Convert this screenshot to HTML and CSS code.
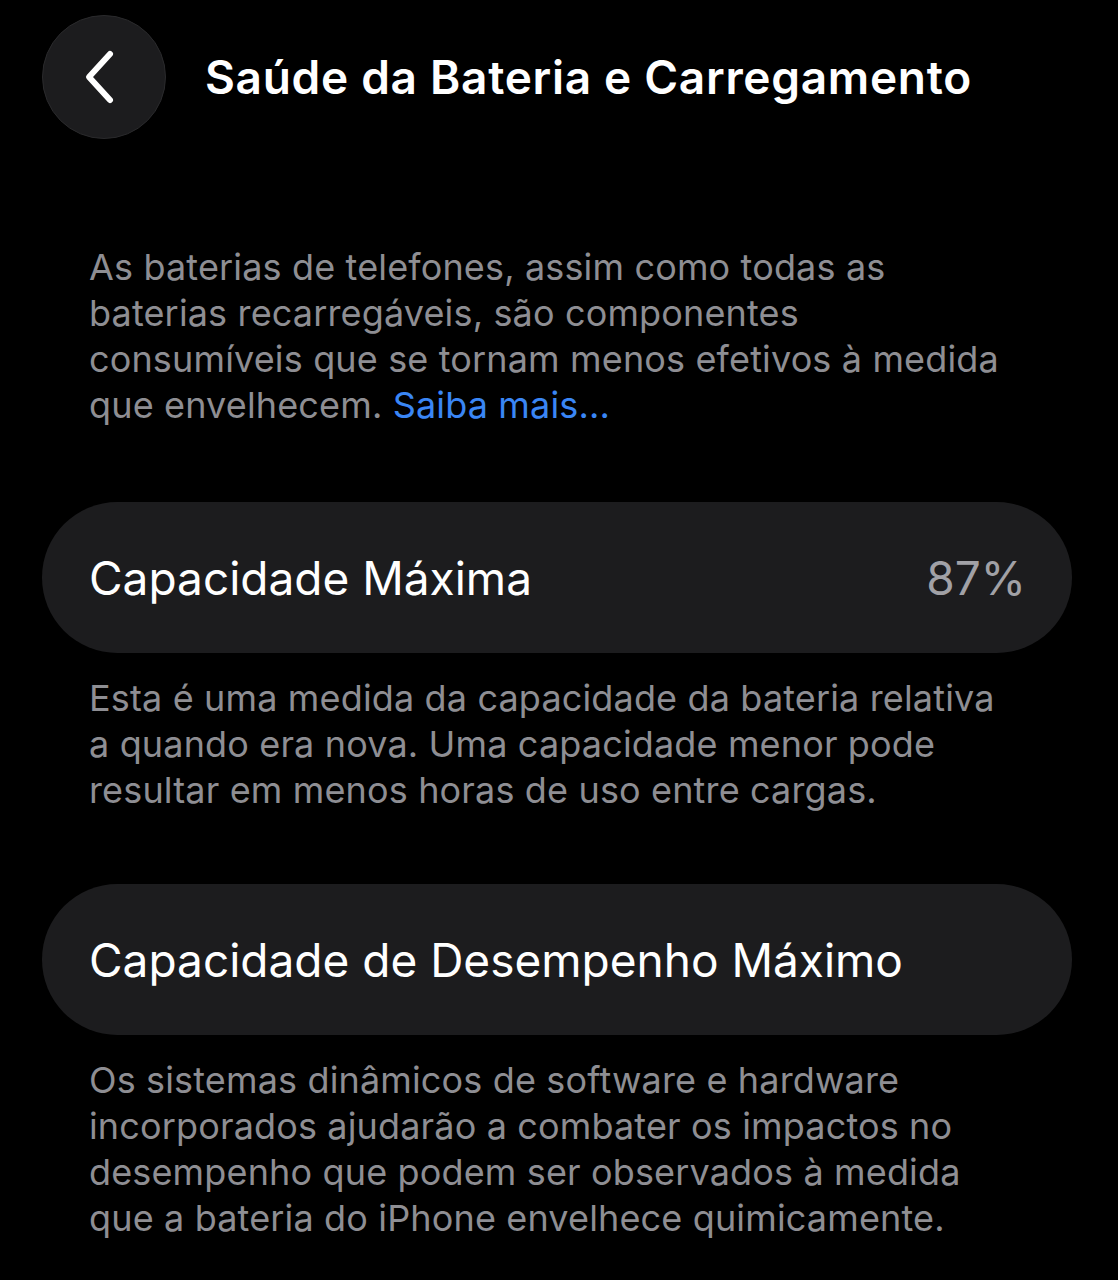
FILE: index.html
```html
<!DOCTYPE html>
<html lang="pt">
<head>
<meta charset="utf-8">
<title>Saúde da Bateria e Carregamento</title>
<link rel="stylesheet" href="styles.css">
</head>
<body>
<div class="screen">
  <header class="nav">
    <button class="back" aria-label="Voltar">
      <svg width="40" height="56" viewBox="0 0 40 56" aria-hidden="true">
        <path d="M30 5 L9 28 L30 51" fill="none" stroke="#ffffff" stroke-width="6" stroke-linecap="round" stroke-linejoin="round"/>
      </svg>
    </button>
    <h1 class="title">Saúde da Bateria e Carregamento</h1>
  </header>

  <p class="note intro">As baterias de telefones, assim como todas as baterias recarregáveis, são componentes consumíveis que se tornam menos efetivos à medida que envelhecem. <a class="link" href="#">Saiba mais...</a></p>

  <div class="card">
    <span class="label">Capacidade Máxima</span>
    <span class="value">87%</span>
  </div>
  <p class="note">Esta é uma medida da capacidade da bateria relativa a quando era nova. Uma capacidade menor pode resultar em menos horas de uso entre cargas.</p>

  <div class="card card-second">
    <span class="label">Capacidade de Desempenho Máximo</span>
  </div>
  <p class="note">Os sistemas dinâmicos de software e hardware incorporados ajudarão a combater os impactos no desempenho que podem ser observados à medida que a bateria do iPhone envelhece quimicamente.</p>
</div>
</body>
</html>
```
FILE: styles.css
```css
html, body {
  margin: 0;
  padding: 0;
  background: #000000;
}
body {
  font-family: Inter, "Noto Sans", "Liberation Sans", sans-serif;
  color: #ffffff;
  width: 1118px;
  height: 1280px;
  overflow: hidden;
}
.screen {
  padding: 15px 46px 0 42px;
}
.nav {
  display: flex;
  align-items: center;
  gap: 39px;
}
.back {
  width: 124px;
  height: 124px;
  border-radius: 50%;
  background: #1c1c1e;
  border: 1px solid #2a2a2c;
  display: flex;
  align-items: center;
  justify-content: center;
  padding: 0 8px 0 0;
  flex: none;
}
.title {
  margin: 0;
  font-size: 46px;
  font-weight: 600;
  letter-spacing: 0.7px;
  color: #ffffff;
}
.note {
  margin: 22px 0 0 47px;
  width: 928px;
  font-size: 36px;
  line-height: 46px;
  color: #8e8e93;
  letter-spacing: 0.15px;
}
.intro {
  margin-top: 105px;
}
.link {
  color: #3a86f5;
  text-decoration: none;
}
.card {
  margin-top: 74px;
  height: 151px;
  border-radius: 76px;
  background: #1c1c1e;
  display: flex;
  align-items: center;
  justify-content: space-between;
  padding: 0 46px 0 47px;
  box-sizing: border-box;
  width: 1030px;
}
.card-second {
  margin-top: 71px;
}
.label {
  font-size: 46px;
  color: #ffffff;
}
.value {
  font-size: 46px;
  color: #a1a1a6;
}
```
